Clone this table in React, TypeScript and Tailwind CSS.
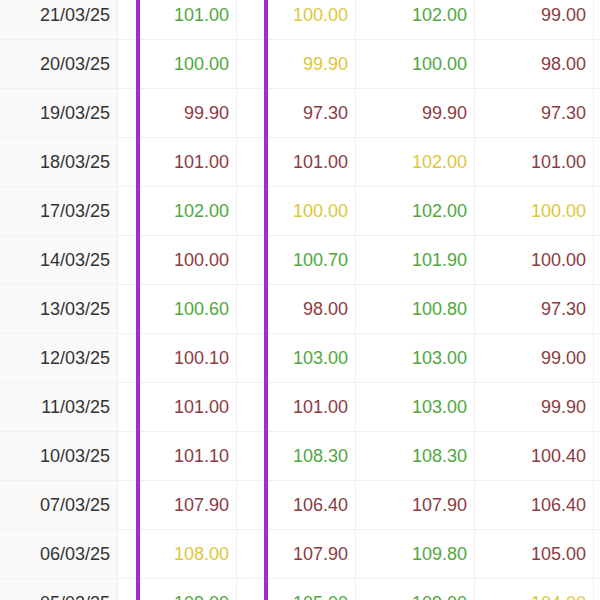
type Tone = 'g' | 'r' | 'y'

interface PriceRow {
  date: string
  cells: [string, Tone][]
}

const rows: PriceRow[] = [
  { date: '21/03/25', cells: [['101.00', 'g'], ['100.00', 'y'], ['102.00', 'g'], ['99.00', 'r']] },
  { date: '20/03/25', cells: [['100.00', 'g'], ['99.90', 'y'], ['100.00', 'g'], ['98.00', 'r']] },
  { date: '19/03/25', cells: [['99.90', 'r'], ['97.30', 'r'], ['99.90', 'r'], ['97.30', 'r']] },
  { date: '18/03/25', cells: [['101.00', 'r'], ['101.00', 'r'], ['102.00', 'y'], ['101.00', 'r']] },
  { date: '17/03/25', cells: [['102.00', 'g'], ['100.00', 'y'], ['102.00', 'g'], ['100.00', 'y']] },
  { date: '14/03/25', cells: [['100.00', 'r'], ['100.70', 'g'], ['101.90', 'g'], ['100.00', 'r']] },
  { date: '13/03/25', cells: [['100.60', 'g'], ['98.00', 'r'], ['100.80', 'g'], ['97.30', 'r']] },
  { date: '12/03/25', cells: [['100.10', 'r'], ['103.00', 'g'], ['103.00', 'g'], ['99.00', 'r']] },
  { date: '11/03/25', cells: [['101.00', 'r'], ['101.00', 'r'], ['103.00', 'g'], ['99.90', 'r']] },
  { date: '10/03/25', cells: [['101.10', 'r'], ['108.30', 'g'], ['108.30', 'g'], ['100.40', 'r']] },
  { date: '07/03/25', cells: [['107.90', 'r'], ['106.40', 'r'], ['107.90', 'r'], ['106.40', 'r']] },
  { date: '06/03/25', cells: [['108.00', 'y'], ['107.90', 'r'], ['109.80', 'g'], ['105.00', 'r']] },
  { date: '05/03/25', cells: [['109.00', 'g'], ['105.00', 'g'], ['109.00', 'g'], ['104.00', 'y']] },
]

const toneClass: Record<Tone, string> = {
  g: 'text-[#4fa83d]',
  r: 'text-[#8c3b3f]',
  y: 'text-[#dcc73a]',
}

export default function App() {
  return (
    <div className="relative h-[600px] w-[600px] overflow-hidden bg-white font-['Liberation_Sans',Arial,sans-serif] text-[18px]">
      <div className="-mt-[9px]">
        {rows.map((row) => (
          <div key={row.date} className="flex h-[49px] border-b border-[#f0f0f0]">
            <div className="flex w-[118px] shrink-0 items-center justify-end border-r border-[#ececec] bg-[#f9f9f9] pr-[7px] text-[#333]">
              {row.date}
            </div>
            {row.cells.map(([value, tone], i) => (
              <div
                key={i}
                className={`flex w-[119px] shrink-0 items-center justify-end border-r border-[#f0f0f0] pr-[7px] ${toneClass[tone]}`}
              >
                {value}
              </div>
            ))}
          </div>
        ))}
      </div>
      {/* highlight box drawn over the first price column */}
      <div className="pointer-events-none absolute inset-y-0 left-[136px] w-[132px] border-x-[4px] border-[#a02fc9]" />
    </div>
  )
}
